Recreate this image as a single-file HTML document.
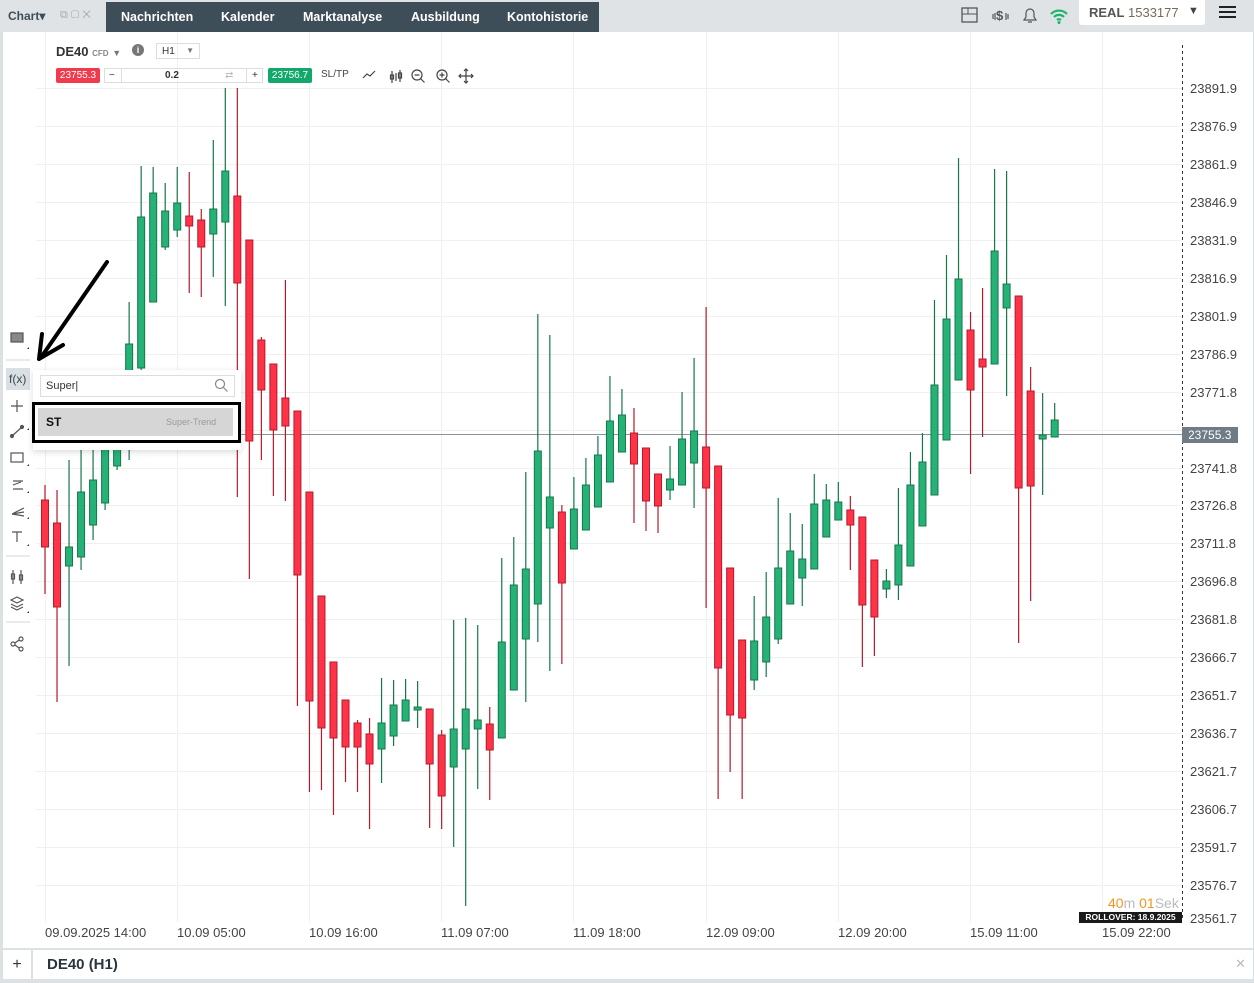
<!DOCTYPE html>
<html><head><meta charset="utf-8"><style>
*{margin:0;padding:0;box-sizing:border-box}
body{width:1254px;height:983px;background:#dce1e4;font-family:"Liberation Sans",sans-serif;position:relative;overflow:hidden}
.top{position:absolute;left:0;top:0;width:1254px;height:32px;background:#dfe3e6}
.tabs{position:absolute;left:106px;top:2px;width:493px;height:30px;background:#3e4e58;color:#fff;font-weight:bold;font-size:12.5px}
.tabs span{position:absolute;top:8px}
.main{position:absolute;left:3px;top:32px;width:1250px;height:916px;background:#fff}
.bot{position:absolute;left:3px;top:950px;width:1250px;height:29px;background:#fff}
.abs{position:absolute}
.ax{position:absolute;left:1190px;font-size:13px;color:#444}
.dx{position:absolute;top:925px;font-size:13px;color:#444}
</style></head><body>
<div class="top">
 <div class="abs" style="left:8px;top:9px;font-size:12px;color:#3e4e58;font-weight:bold">Chart▾</div>
 <div class="abs" style="left:60px;top:9px;font-size:11px;color:#aaa">⧉ ▢ ✕</div>
 <div class="tabs"><span style="left:15px">Nachrichten</span><span style="left:115px">Kalender</span><span style="left:197px">Marktanalyse</span><span style="left:305px">Ausbildung</span><span style="left:401px">Kontohistorie</span></div>
 <svg class="abs" style="left:960px;top:5px" width="110" height="22">
  <rect x="2" y="3" width="15" height="14" fill="none" stroke="#555" stroke-width="1.3"/><line x1="2" y1="9" x2="17" y2="9" stroke="#555"/><line x1="8" y1="3" x2="8" y2="9" stroke="#555"/>
  <text x="36" y="15" font-size="13" font-weight="bold" fill="#555" font-family="Liberation Sans">$</text>
  <path d="M33 9v5M35 8v7M46 8v7M48 9v5" stroke="#555" stroke-width="1.2"/>
  <path d="M64 15h12l-2-3v-4a4 4 0 0 0-8 0v4z M68 17h4" fill="none" stroke="#555" stroke-width="1.2"/>
  <path d="M91 9a11 11 0 0 1 16 0M94 12a7 7 0 0 1 10 0M97 15a3 3 0 0 1 4 0" fill="none" stroke="#1db36a" stroke-width="2.2"/><circle cx="99" cy="17.5" r="1.5" fill="#1db36a"/>
 </svg>
 <div class="abs" style="left:1079px;top:0;width:126px;height:25px;background:#fff;border-radius:0 0 3px 3px"></div>
 <div class="abs" style="left:1089px;top:5px;font-size:13px;color:#555"><b>REAL</b> <span style="color:#7a6a55">1533177</span></div>
 <div class="abs" style="left:1188px;top:5px;font-size:11px;color:#444">▼</div>
 <div class="abs" style="left:1219px;top:6px;width:17px;height:2px;background:#222;box-shadow:0 5px 0 #222,0 10px 0 #222"></div>
</div>
<div class="main"></div>
<svg class="abs" style="left:0;top:0" width="1254" height="983" id="ch"></svg>
<div class="abs" style="left:56px;top:44px;font-size:13px;font-weight:bold;color:#333">DE40 <span style="font-size:8px;color:#888">CFD</span> <span style="font-size:9px;color:#777">▼</span></div>
<div class="abs" style="left:132px;top:44px;width:12px;height:12px;border-radius:50%;background:#777;color:#fff;font-size:9px;text-align:center;line-height:12px;font-weight:bold">i</div>
<div class="abs" style="left:156px;top:43px;width:44px;height:16px;border:1px solid #ddd;font-size:10px;color:#333;padding:2px 5px">H1 <span style="float:right;font-size:8px;color:#777">▼</span></div>
<div class="abs" style="left:56px;top:68px;width:44px;height:15px;background:#f03b4c;color:#fff;font-size:10px;text-align:center;line-height:15px;border-radius:2px">23755.3</div>
<div class="abs" style="left:104px;top:68px;width:159px;height:15px;border:1px solid #ddd;font-size:10px;color:#333;line-height:13px"><span class="abs" style="left:4px">−</span><span class="abs" style="left:16px;top:0;height:13px;border-left:1px solid #ddd"></span><b class="abs" style="left:60px">0.2</b><span class="abs" style="left:120px;color:#bbb">⇄</span><span class="abs" style="left:141px;top:0;height:13px;border-left:1px solid #ddd"></span><span class="abs" style="left:147px">+</span></div>
<div class="abs" style="left:268px;top:68px;width:44px;height:15px;background:#13a86b;color:#fff;font-size:10px;text-align:center;line-height:15px;border-radius:2px">23756.7</div>
<div class="abs" style="left:321px;top:69px;font-size:10px;color:#444">SL/TP</div>
<svg class="abs" style="left:360px;top:66px" width="120" height="20" fill="none" stroke="#444" stroke-width="1.2">
 <path d="M3 12l4-4 3 2 5-5"/>
 <path d="M32 5v12M36 7v8M40 4v12"/><rect x="30.5" y="9" width="3" height="4"/><rect x="38.5" y="7" width="3" height="5"/>
 <circle cx="57" cy="9" r="5"/><path d="M60.5 12.5l4 4M54.5 9h5"/>
 <circle cx="82" cy="9" r="5"/><path d="M85.5 12.5l4 4M79.5 9h5M82 6.5v5"/>
 <path d="M106 3v14M99 10h14M104 5l2-2 2 2M104 15l2 2 2-2M101 8l-2 2 2 2M111 8l2 2-2 2"/>
</svg>
<div class="abs" style="left:6px;top:368px;width:24px;height:22px;background:#d8dfe5"></div>
<svg class="abs" style="left:0;top:320px" width="40" height="340" fill="none" stroke="#555" stroke-width="1.2">
 <rect x="11" y="13" width="12" height="9" fill="#888"/>
 <line x1="6" y1="40" x2="30" y2="40" stroke="#ddd"/>
 <path d="M17 80v12M11 86h12"/>
 <path d="M12 116l10-9"/><circle cx="12" cy="116" r="1.5" fill="#555"/><circle cx="22" cy="107" r="1.5" fill="#555"/>
 <rect x="11" y="133" width="12" height="9"/>
 <path d="M13 161h10M13 165l8-3M13 169h10"/>
 <path d="M12 194l12-6M12 194l12-2M12 194l12 2"/>
 <path d="M12 212h10M17 212v10"/>
 <line x1="6" y1="236" x2="30" y2="236" stroke="#ddd"/>
 <path d="M13 250v14M21 250v14"/><rect x="11.5" y="254" width="3" height="5"/><rect x="19.5" y="255" width="3" height="5"/>
 <path d="M17 277l6 3-6 3-6-3zM11 284l6 3 6-3M11 287l6 3 6-3"/>
 <line x1="6" y1="302" x2="30" y2="302" stroke="#ddd"/>
 <circle cx="13" cy="324" r="2"/><circle cx="21" cy="319" r="2"/><circle cx="21" cy="329" r="2"/><path d="M15 323l4-3M15 325l4 3"/>
 <g fill="#333" stroke="none"><path d="M27 29h2v-2zM27 110h2v-2zM27 146h2v-2zM27 173h2v-2zM27 199h2v-2zM27 226h2v-2zM27 293h2v-2z"/></g>
</svg>
<div class="abs" style="left:9px;top:372px;font-size:12px;color:#444">f(x)</div>
<div class="abs" style="left:33px;top:370px;width:208px;height:80px;background:#fff;box-shadow:0 2px 6px rgba(0,0,0,.15)"></div>
<div class="abs" style="left:40px;top:375px;width:195px;height:22px;border:1px solid #ddd;font-size:11px;color:#333;padding:4px 5px">Super|</div>
<svg class="abs" style="left:214px;top:378px" width="16" height="16" fill="none" stroke="#888" stroke-width="1.2"><circle cx="6" cy="6" r="4.5"/><path d="M9.5 9.5l4 4"/></svg>
<div class="abs" style="left:38px;top:408px;width:195px;height:28px;background:#d6d6d6"></div>
<div class="abs" style="left:46px;top:415px;font-size:12px;font-weight:bold;color:#111">ST</div>
<div class="abs" style="left:166px;top:417px;font-size:9px;color:#999">Super-Trend</div>
<div class="abs" style="left:32px;top:402px;width:209px;height:41px;border:3px solid #000"></div>
<div class="abs" style="left:1108px;top:895px;font-size:14px;color:#f7931e">40<span style="color:#bbb">m</span> 01<span style="color:#bbb">Sek</span></div>
<div class="abs" style="left:1079px;top:912px;width:103px;height:11px;background:#1a1a1a;color:#fff;font-size:8.5px;font-weight:bold;text-align:center;line-height:11px">ROLLOVER: 18.9.2025</div>
<div class="abs" style="left:1182px;top:427px;width:56px;height:16px;background:#6f7c84;color:#fff;font-size:12px;line-height:16px;padding-left:6px">23755.3</div>
<div class="abs" style="left:1182px;top:428px;width:0;height:0;border:7px solid transparent;border-right-color:#6f7c84;margin-left:-7px"></div>
<div class="bot"><div class="abs" style="left:0;top:0;width:30px;height:29px;border-right:2px solid #dce1e4;font-size:16px;text-align:center;line-height:29px;color:#333">+</div>
<div class="abs" style="left:44px;top:6px;font-size:15px;font-weight:bold;color:#2a3540">DE40 (H1)</div>
<div class="abs" style="left:1232px;top:6px;font-size:13px;color:#bbb">✕</div></div>
<div id="lab"></div>
<script>
var s='';
var yl=[88,126,164,202,240,278,316,354,392,430,468,505,543,581,619,657,695,733,771,809,847,885,918];
var pv=['23891.9','23876.9','23861.9','23846.9','23831.9','23816.9','23801.9','23786.9','23771.8','','23741.8','23726.8','23711.8','23696.8','23681.8','23666.7','23651.7','23636.7','23621.7','23606.7','23591.7','23576.7','23561.7'];
var L='';
for(var i=0;i<yl.length;i++){if(i<22)s+='<line x1="36" x2="1182" y1="'+yl[i]+'.5" y2="'+yl[i]+'.5" stroke="#f0f0f0"/>';if(pv[i])L+='<div class="ax" style="top:'+(yl[i]-7)+'px">'+pv[i]+'</div>';}
var dx=[45,177,309,441,573,706,838,970,1102],dl=['09.09.2025 14:00','10.09 05:00','10.09 16:00','11.09 07:00','11.09 18:00','12.09 09:00','12.09 20:00','15.09 11:00','15.09 22:00'];
for(i=0;i<dx.length;i++){s+='<line y1="32" y2="922" x1="'+dx[i]+'.5" x2="'+dx[i]+'.5" stroke="#f0f0f0"/>';L+='<div class="dx" style="left:'+dx[i]+'px">'+dl[i]+'</div>';}
s+='<line x1="1182.5" x2="1182.5" y1="45" y2="920" stroke="#333" stroke-dasharray="3,3"/>';
s+='<line x1="36" x2="1182" y1="434.5" y2="434.5" stroke="#8a9398"/>';
var C=[['r',500,547,485,594],['r',523,607,490,702],['g',547,566,460,666],['g',492,557,450,570],['g',480,525,440,540],['g',447,503,420,510],['g',420,466,395,470],['g',344,420,302,460],['g',217,368,166,380],
['g',193,302,167,302],['g',211,247,183,250],['g',203,230,167,237],['r',216,226,172,293],['r',220,247,209,297],['g',209,234,140,277],['g',171,222,88,306],['r',196,283,88,497],['r',240,441,240,579],['r',340,390,337,460],['r',364,430,364,496],['r',398,426,280,501],['r',411,575,411,706],
['r',492,701,492,792],['r',596,728,596,790],['r',662,738,662,815],['r',700,747,700,782],['r',723,747,720,792],['r',734,764,718,829],['g',723,749,678,783],['g',705,736,680,746],['g',700,721,679,721],['g',707,710,681,728],['r',709,764,709,828],['r',735,796,730,829],['g',729,767,620,847],['g',709,749,618,906],['g',720,729,625,789],['r',724,750,707,800],['g',642,738,558,738],['g',585,690,537,690],['g',569,639,472,702],['g',451,604,314,642],['g',497,528,335,671],
['r',512,583,505,664],['g',509,549,477,549],['g',485,530,458,530],['g',455,507,436,507],['g',421,482,376,482],['g',415,452,389,452],['r',433,464,408,523],['r',448,501,448,531],['r',474,506,474,533],['g',479,490,446,500],['g',439,485,392,485],['g',431,463,358,508],['r',447,488,307,608],['r',466,668,466,799],['r',568,715,568,772],['r',640,718,640,799],['g',641,680,596,690],['g',617,662,572,677],['g',568,639,498,644],['g',551,604,513,604],['g',559,578,524,606],['g',504,569,474,569],['g',500,537,484,537],
['g',502,520,482,520],['r',510,525,496,570],['r',517,605,517,667],['r',560,617,560,656],['g',581,589,569,598],['g',545,585,488,600],['g',485,566,452,566],['g',462,526,433,526],['g',385,495,300,495],['g',319,440,255,440],['g',279,380,158,380],['r',330,390,312,474],['r',359,367,288,437],['g',251,364,169,364],['g',284,308,171,396],['r',296,488,296,643],['r',391,486,367,601],['g',435,439,393,495],['g',420,437,403,437]];
for(i=0;i<C.length;i++){var c=C[i],x=45+i*12.02,g=c[0]=='g',f=g?'#26b276':'#ff3347',k=g?'#15774a':'#b51a2b';
s+='<line x1="'+x+'" x2="'+x+'" y1="'+c[3]+'" y2="'+c[4]+'" stroke="'+k+'" stroke-width="1.2"/>';
s+='<rect x="'+(x-3.5)+'" y="'+c[1]+'" width="7" height="'+Math.max(2,c[2]-c[1])+'" fill="'+f+'" stroke="'+k+'" stroke-width="1"/>';}
document.getElementById('ch').innerHTML=s;
document.getElementById('lab').innerHTML=L;
</script>
<svg class="abs" style="left:30px;top:255px" width="90" height="115"><path d="M77 7L12 101" stroke="#000" stroke-width="4" stroke-linecap="round"/><path d="M9 104L12 79M9 104L33 90" stroke="#000" stroke-width="4" stroke-linecap="round"/></svg>
</body></html>
